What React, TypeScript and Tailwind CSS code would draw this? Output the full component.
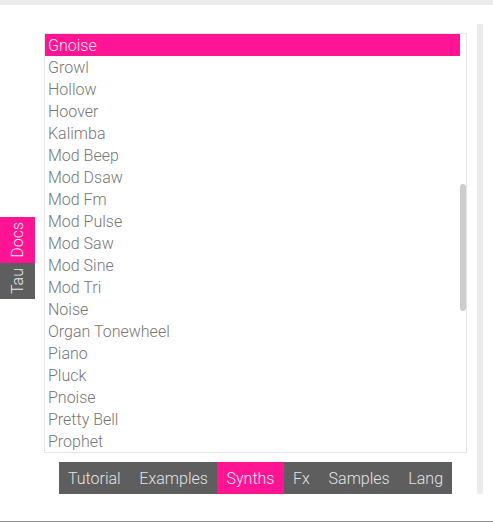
import React from 'react';

const synths = [
  'Gnoise',
  'Growl',
  'Hollow',
  'Hoover',
  'Kalimba',
  'Mod Beep',
  'Mod Dsaw',
  'Mod Fm',
  'Mod Pulse',
  'Mod Saw',
  'Mod Sine',
  'Mod Tri',
  'Noise',
  'Organ Tonewheel',
  'Piano',
  'Pluck',
  'Pnoise',
  'Pretty Bell',
  'Prophet',
  'Saw',
];

const tabs = ['Tutorial', 'Examples', 'Synths', 'Fx', 'Samples', 'Lang'];

export default function App() {
  const selected = 'Gnoise';
  const activeTab = 'Synths';

  return (
    <div
      className="flex h-[522px] w-[493px] flex-col overflow-hidden bg-white font-light"
      style={{ fontFamily: 'Roboto, "Liberation Sans", sans-serif' }}
    >
      <div className="h-[5px] shrink-0 bg-[#ebebeb]" />

      <div className="flex flex-1 items-start">
        {/* side tabs */}
        <div className="mt-[212px] flex w-[35px] shrink-0 flex-col text-[16px]">
          <div className="flex h-[46px] items-center justify-center bg-[#ff1493] text-[#ffe6f2]">
            <span className="rotate-180 leading-none [writing-mode:vertical-rl]">Docs</span>
          </div>
          <div className="flex h-[36px] items-center justify-center bg-[#5e5e5e] text-[#e8e8e8]">
            <span className="rotate-180 leading-none [writing-mode:vertical-rl]">Tau</span>
          </div>
        </div>

        {/* docs content */}
        <div className="ml-[9px] mt-[28px] flex w-[423px] shrink-0 flex-col items-center">
          <div className="flex h-[420px] w-full overflow-hidden border border-[#e6e6e6]">
            <ul className="flex-1">
              {synths.map((s) => (
                <li
                  key={s}
                  className={
                    s === selected
                      ? 'h-[22px] bg-[#ff1493] pl-[3px] pt-[1px] text-[16px] leading-[22px] text-[#ffe6f2]'
                      : 'h-[22px] pl-[3px] pt-[1px] text-[16px] leading-[22px] text-[#767676]'
                  }
                >
                  {s}
                </li>
              ))}
            </ul>
            <div className="w-[6px] shrink-0">
              <div className="mt-[150px] h-[127px] rounded-[3px] bg-[#cdcdcd]" />
            </div>
          </div>

          <div className="mt-[9px] flex h-[32px] bg-[#5e5e5e] text-[16px]">
            {tabs.map((t) => (
              <div
                key={t}
                className={
                  t === activeTab
                    ? 'flex items-center bg-[#ff1493] px-[9.33px] pt-[2px] text-[#ffe6f2]'
                    : 'flex items-center px-[9.33px] pt-[2px] text-[#e3e3e3]'
                }
              >
                {t}
              </div>
            ))}
          </div>
        </div>

        {/* right gutter */}
        <div className="ml-[10px] mt-[19px] h-[470px] w-[6px] shrink-0 bg-[#ebebeb]" />
      </div>

      <div className="h-[1px] shrink-0 bg-[#8c8c8c]" />
    </div>
  );
}
